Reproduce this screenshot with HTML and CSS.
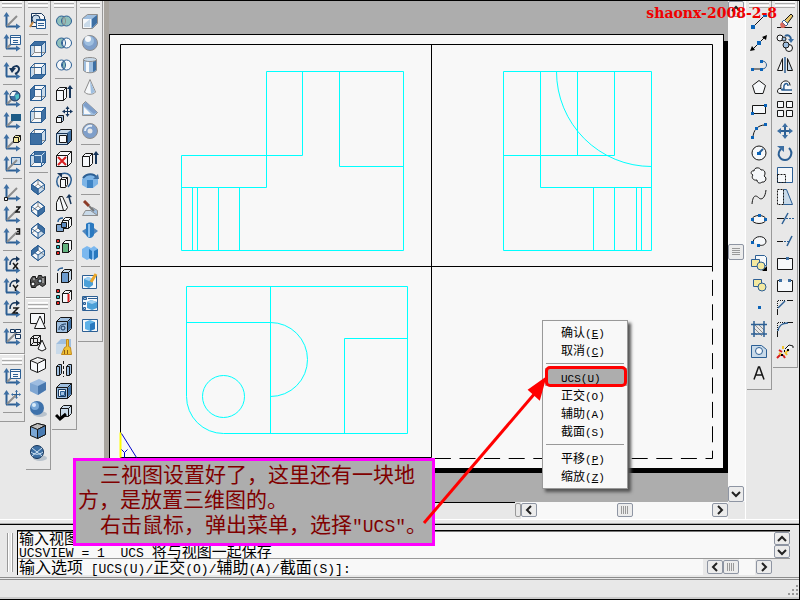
FILE: index.html
```html
<!DOCTYPE html>
<html lang="zh-CN">
<head>
<meta charset="utf-8">
<title>CAD 三视图</title>
<link rel="stylesheet" href="styles.css">
</head>
<body>
<svg class="defs" aria-hidden="true">
  <symbol id="axes" viewBox="0 0 18 18"><path class="t" d="M3.500 3v11.500M3 14.500h11"/><path class="n f1" d="M.5 4.500 3.500 0l3 4.500zM13 11.500l4.500 3-4.500 3z"/></symbol>
  <symbol id="diag" viewBox="0 0 18 18"><path class="g t" d="M4 14 14 4"/></symbol>
  <symbol id="box" viewBox="0 0 18 18"><path class="f3" d="M1.500 5.500l4-4h11v11l-4 4h-11z"/><path class="n f5" d="M6 2v10l-4 4V6zM12 16l4-4V2l-4 4z"/><path class="g" d="M5.500 2v10.500h11M5.500 12.500l-4 4"/><path d="M1.500 5.500h11v11h-11zM12.500 5.500l4-4h-11l-4 4M16.500 1.500v11l-4 4"/></symbol>
  <symbol id="iso" viewBox="0 0 18 18"><path class="f3" d="M9 1.500l6.500 5v5L9 16.500l-6.500-5v-5z"/><path class="n f5" d="M9 11l6-4v4l-6 5z"/><path class="g" d="M9 2v4l-6 5M9 6l6 5"/><path d="M9 1.500l6.500 5v5L9 16.500l-6.500-5v-5zM2.500 6.500L9 11l6.500-4.500M9 11v5.500"/></symbol>
  <symbol id="solid" viewBox="0 0 18 18"><path class="k f2" d="M1.500 5.500l4-4h11v11l-4 4h-11z"/><path class="n f1" d="M13 6l3-3v9l-3 3z"/><path class="k" d="M1.500 5.500h11v11M12.500 5.500l4-4"/></symbol>
  <symbol id="rot" viewBox="0 0 18 18"><path class="d" stroke-width="1.500" d="M7 9c0-5 3-7 7-6"/><path class="n f4" d="M13 0l4 3-4 3z"/></symbol>
  <symbol id="list" viewBox="0 0 18 18"><path class="k" fill="#e22" d="M1.500 1.500h3v3h-3z"/><path class="k" fill="#2bb" d="M1.500 7.500h3v3h-3z"/><path class="k" fill="#e22" d="M1.500 13.500h3v3h-3z"/></symbol>
  <symbol id="up" viewBox="0 0 10 8"><path d="M1 6l4-4 4 4"/></symbol>
  <symbol id="down" viewBox="0 0 10 8"><path d="M1 2l4 4 4-4"/></symbol>
  <symbol id="left" viewBox="0 0 8 10"><path d="M6 1L2 5l4 4"/></symbol>
  <symbol id="right" viewBox="0 0 8 10"><path d="M2 1l4 4-4 4"/></symbol>
</svg>

<div class="app">
  <main class="workspace">
    <div class="dock">
      <div class="column">
        <div class="toolbar" role="toolbar" aria-label="UCS">
          <i class="grip"></i>
          <button class="tool" aria-label="UCS"><svg viewBox="0 0 18 18"><use href="#axes"/><use href="#diag"/></svg></button>
          <button class="tool" aria-label="命名 UCS"><svg viewBox="0 0 18 18"><use href="#axes"/><use href="#diag"/><path class="f3" d="M7.500 1.500h10v9h-10z"/><path d="M8 3.500h9M10 6.500h5M10 8.500h5"/></svg></button>
          <hr>
          <button class="tool" aria-label="上一个 UCS"><svg viewBox="0 0 18 18"><use href="#axes"/><path class="d t" d="M9 8c1-5 7-5 7-1 0 3-2 4-4 5"/><path class="n f4" d="M6 6h7l-4 5z"/></svg></button>
          <hr>
          <button class="tool" aria-label="世界 UCS"><svg viewBox="0 0 18 18"><use href="#axes"/><use href="#diag"/><circle class="d f1" cx="12" cy="6" r="5"/><path class="n f3" d="M9 2l4 0-2 4-4 0z"/><path class="n" fill="#4fc3c8" d="M12 5l4-1v4l-3 2z"/></svg></button>
          <button class="tool" aria-label="对象 UCS"><svg viewBox="0 0 18 18"><use href="#axes"/><use href="#diag"/><path class="n" fill="#1d5b86" d="M8 2h10v7H8z"/></svg></button>
          <button class="tool" aria-label="面 UCS"><svg viewBox="0 0 18 18"><use href="#axes"/><use href="#diag"/><path class="k y" d="M10.500 3.500l2-2h5v5l-2 2h-5z"/><path class="k" d="M10.500 3.500h5v5M15.500 3.500l2-2"/></svg></button>
          <button class="tool" aria-label="视图 UCS"><svg viewBox="0 0 18 18"><use href="#axes"/><path class="f5" d="M8.500 1.500h9v7h-9z"/><use href="#diag"/></svg></button>
          <hr>
          <button class="tool" aria-label="原点 UCS"><svg viewBox="0 0 18 18"><use href="#axes"/><use href="#diag"/><path class="k f3" d="M1.500 13.500h3v3h-3z"/></svg></button>
          <button class="tool" aria-label="Z 轴矢量 UCS"><svg viewBox="0 0 18 18"><use href="#axes"/><use href="#diag"/><path class="k" stroke-width="1.500" d="M13 1h4l-4 5h4"/></svg></button>
          <button class="tool" aria-label="三点 UCS"><svg viewBox="0 0 18 18"><use href="#axes"/><use href="#diag"/><path class="k" stroke-width="1.500" d="M13 1h3.500v2.500H14M16.500 3.500V6H13"/></svg></button>
          <hr>
          <button class="tool" aria-label="绕 X 轴旋转"><svg viewBox="0 0 18 18"><use href="#axes"/><use href="#rot"/><path class="k" stroke-width="1.500" d="M10 7l5 6M15 7l-5 6"/></svg></button>
          <button class="tool" aria-label="绕 Y 轴旋转"><svg viewBox="0 0 18 18"><use href="#axes"/><use href="#rot"/><path class="k" stroke-width="1.500" d="M10 7l2.500 3L15 7M12.500 10v3"/></svg></button>
          <button class="tool" aria-label="绕 Z 轴旋转"><svg viewBox="0 0 18 18"><use href="#axes"/><use href="#rot"/><path class="k" stroke-width="1.500" d="M10 8h5l-5 5h5"/></svg></button>
          <hr>
          <button class="tool" aria-label="应用 UCS"><svg viewBox="0 0 18 18"><use href="#axes"/><use href="#diag"/><path class="d f3" d="M7.500 1.500h4v3h-4zM12.500 1.500h5v3h-5zM12.500 6.500h5v4h-5z"/></svg></button>
        </div>
        <div class="toolbar" role="toolbar" aria-label="UCS II">
          <i class="grip"></i>
          <button class="tool" aria-label="显示 UCS 对话框"><svg viewBox="0 0 18 18"><use href="#axes"/><use href="#diag"/><path class="f3" d="M7.500 1.500h10v9h-10z"/><path d="M8 3.500h9M10 6.500h5M10 8.500h5"/></svg></button>
          <button class="tool" aria-label="移动 UCS 原点"><svg viewBox="0 0 18 18"><use href="#axes"/><use href="#diag"/><path d="M13.500 0v8M9.500 4.500h8"/><path class="n f1" d="M12 2l1.500-2L15 2zM12 7l1.500 2L15 7zM10 3L8 4.500 10 6zM16 3l2 1.500L16 6z"/></svg></button>
          <hr>
        </div>
      </div>

      <div class="column">
        <div class="toolbar" role="toolbar" aria-label="视图">
          <i class="grip"></i>
          <button class="tool" aria-label="命名视图"><svg viewBox="0 0 18 18"><path class="d f3" d="M2.500 1.500h10l3 3v10h-13z"/><circle class="d f5" cx="7" cy="7" r="4"/><path stroke="#c58a45" class="t" d="M4 10l-3 5"/><path class="f3" d="M7.500 7.500h9v9h-9z"/><path class="t" d="M7 8h10"/><path d="M9 11.500h6M9 13.500h6"/></svg></button>
          <hr>
          <button class="tool" aria-label="俯视"><svg viewBox="0 0 18 18"><use href="#box"/><path class="f1" d="M1.500 5.500l4-4h11l-4 4z"/></svg></button>
          <button class="tool" aria-label="仰视"><svg viewBox="0 0 18 18"><use href="#box"/><path class="f1" d="M1.500 16.500l4-4h11l-4 4z"/></svg></button>
          <button class="tool" aria-label="左视"><svg viewBox="0 0 18 18"><use href="#box"/><path class="f1" d="M1.500 5.500l4-4v11l-4 4z"/></svg></button>
          <button class="tool" aria-label="右视"><svg viewBox="0 0 18 18"><use href="#box"/><path class="f1" d="M12.500 5.500l4-4v11l-4 4z"/></svg></button>
          <button class="tool" aria-label="主视"><svg viewBox="0 0 18 18"><use href="#box"/><path class="f1" d="M1.500 5.500h11v11h-11z"/></svg></button>
          <button class="tool" aria-label="后视"><svg viewBox="0 0 18 18"><use href="#box"/><path class="f1" d="M5.500 1.500h11v11h-11z"/><path class="w" d="M5.500 5.500h7v7M12.500 5.500l3-3"/></svg></button>
          <hr>
          <button class="tool" aria-label="西南等轴测"><svg viewBox="0 0 18 18"><use href="#iso"/><path class="f1" d="M2.500 6.500L9 11v5.500l-6.500-5z"/></svg></button>
          <button class="tool" aria-label="东南等轴测"><svg viewBox="0 0 18 18"><use href="#iso"/><path class="f1" d="M15.500 6.500L9 11v5.500l6.500-5z"/></svg></button>
          <button class="tool" aria-label="东北等轴测"><svg viewBox="0 0 18 18"><use href="#iso"/><path class="f1" d="M9 1.500l6.500 5v5L9 6z"/></svg></button>
          <button class="tool" aria-label="西北等轴测"><svg viewBox="0 0 18 18"><use href="#iso"/><path class="f1" d="M9 1.500l-6.500 5v5L9 6z"/></svg></button>
          <hr>
          <button class="tool" aria-label="相机"><svg viewBox="0 0 18 18"><path class="k" fill="#555" d="M1.500 7.500l2-3h3v2h2l1-3h3l1 2 3-1v8l-3 2-3-2-3 1-1 2h-4l-1-4z"/><circle class="k f5" cx="11" cy="9" r="2"/><circle class="k f3" cx="4" cy="12" r="2"/><path stroke="#ddd" d="M4 7h2M14 6v5"/></svg></button>
        </div>
        <div class="toolbar" role="toolbar" aria-label="着色">
          <i class="grip"></i>
          <button class="tool" aria-label="二维线框"><svg viewBox="0 0 18 18"><path class="k f3" d="M1.500 1.500h14v10h-14z"/><path class="k f3" d="M11 4l5.500 12.500h-11z"/></svg></button>
          <button class="tool" aria-label="三维线框"><svg viewBox="0 0 18 18"><path class="k" d="M1.500 4.500l3-3h7v7l-3 3h-7zM1.500 4.500h7v7M8.500 4.500l3-3M4.500 2v6.500h7M4.500 8.500l-3 3"/><path class="k f3" d="M13 6l4 9-4 2-4-2z"/></svg></button>
          <button class="tool" aria-label="消隐"><svg viewBox="0 0 18 18"><path class="k f3" d="M1.500 4.500l7-3 8 2v9l-8 4-7-3zM1.500 4.500l7 3 8-4M8.500 7.500v9"/></svg></button>
          <button class="tool" aria-label="平面着色"><svg viewBox="0 0 18 18"><path class="n" fill="#9dbce0" d="M1 5l9-4 7 3v8l-8 5-8-4z"/><path class="n" fill="#7fa6d2" d="M1 5l8 3v9l-8-4z"/><path class="n" fill="#4877ad" d="M17 4v8l-8 5V8z"/></svg></button>
          <button class="tool" aria-label="体着色"><svg viewBox="0 0 18 18"><ellipse class="n" fill="#b9c3cd" cx="11" cy="14" rx="7" ry="3"/><circle class="n" fill="#3e72ab" cx="8" cy="8" r="7"/><circle class="n" fill="#78a7d8" cx="6" cy="6" r="4"/><circle class="n" fill="#d9ebfa" cx="5" cy="5" r="2"/></svg></button>
          <button class="tool" aria-label="带边框平面着色"><svg viewBox="0 0 18 18"><path class="k" fill="#7aa7d6" d="M1.500 4.500l7-3 8 2v9l-8 4-7-3z"/><path class="k" fill="#bdbdbd" d="M1.500 4.500l7-3 8 2-8 4z"/><path class="k" fill="#4a7cb3" d="M8.500 7.500l8-4v9l-8 4z"/></svg></button>
          <button class="tool" aria-label="带边框体着色"><svg viewBox="0 0 18 18"><ellipse class="n" fill="#b9c3cd" cx="11" cy="14" rx="7" ry="3"/><circle class="d f1" cx="8" cy="8" r="6.500"/><path class="w" d="M3 4l10 8M13 4L3 12M2 8c4 3 8 3 12 0"/></svg></button>
        </div>
      </div>

      <div class="column">
        <div class="toolbar" role="toolbar" aria-label="实体编辑">
          <i class="grip"></i>
          <button class="tool" aria-label="并集"><svg viewBox="0 0 18 18"><circle fill="#8fc0bd" cx="6.500" cy="9" r="5"/><circle fill="#8fc0bd" cx="11.500" cy="9" r="5"/><path class="g" d="M9 5c-2 2-2 6 0 8 2-2 2-6 0-8"/></svg></button>
          <button class="tool" aria-label="差集"><svg viewBox="0 0 18 18"><circle fill="#8fc0bd" cx="6.500" cy="9" r="5"/><circle class="f3" cx="11.500" cy="9" r="5"/><path d="M9 5c-2 2-2 6 0 8 2-2 2-6 0-8"/></svg></button>
          <button class="tool" aria-label="交集"><svg viewBox="0 0 18 18"><circle class="f3" cx="6.500" cy="9" r="5"/><circle class="f3" cx="11.500" cy="9" r="5"/><path fill="#8fc0bd" d="M9 5c-2 2-2 6 0 8 2-2 2-6 0-8"/></svg></button>
          <hr>
          <button class="tool" aria-label="拉伸面"><svg viewBox="0 0 18 18"><path class="k f3" d="M1.500 6.500l3-3h7v10l-3 3h-7zM1.500 6.500h7v10M8.500 6.500l3-3"/><path class="d t" d="M15 4v10"/><path class="n f4" d="M12 5l3-4 3 4z"/></svg></button>
          <button class="tool" aria-label="移动面"><svg viewBox="0 0 18 18"><path class="k f2" d="M1.500 11.500l2-2h5v5l-2 2h-5z"/><path class="k f3" d="M1.500 11.500h5v5h-5z"/><path class="d" d="M12.500 1v9M8 5.500h9"/><path class="n f4" d="M10.500 3l2-3 2 3zM10.500 8l2 3 2-3zM10 3.500L7 5.500l3 2zM15 3.500l3 2-3 2z"/></svg></button>
          <button class="tool" aria-label="偏移面"><svg viewBox="0 0 18 18"><path class="k f1" d="M1.500 5.500l4-4h11v11l-4 4h-11z"/><path class="n f5" d="M3 5l3-3h10l-4 3z"/><path class="d f5" d="M1.500 5.500h11v11h-11z"/><path class="k f3" d="M4.500 7.500h7v7h-7z"/></svg></button>
          <button class="tool" aria-label="删除面"><svg viewBox="0 0 18 18"><path class="k f3" d="M1.500 5.500l4-4h11v11l-4 4h-11zM1.500 5.500h11v11M12.500 5.500l4-4"/><path class="r t" d="M3 7l8 8M11 7l-8 8"/></svg></button>
          <button class="tool" aria-label="旋转面"><svg viewBox="0 0 18 18"><path class="k f3" d="M5.500 7.500l2-2h5v7l-2 3h-5zM5.500 7.500h5v7M10.500 7.500l2-2"/><path stroke-width="1.500" d="M4 4C1 7 1 12 4 15M6 2c5-2 9 0 10 4 1 4-1 7-3 9"/><path class="n f4" d="M2 1h5v5z"/></svg></button>
          <button class="tool" aria-label="倾斜面"><svg viewBox="0 0 18 18"><path class="k f3" d="M1.500 8.500l3-6h3l5 11-2 3h-9zM4.500 2.500l4 14"/><path class="d" stroke-width="1.500" d="M16 10l-2-7"/><path class="n f4" d="M11 4l3-4 3 3z"/></svg></button>
          <button class="tool" aria-label="复制面"><svg viewBox="0 0 18 18"><path class="k f3" d="M7.500 4.500l3-3h6v8l-3 3h-6zM7.500 4.500h6v8M13.500 4.500l3-3"/><path class="k" fill="#7fa6d2" d="M1.500 8.500h7v7h-7z"/><path class="k" fill="#5e8cc0" d="M6.500 6.500h5v5h-5z"/><path stroke-width="1.500" d="M3 6c0-3 2-4 5-4"/></svg></button>
          <button class="tool" aria-label="着色面"><svg viewBox="0 0 18 18"><use href="#list"/><path class="k f3" d="M7.500 5.500l3-3h6v9l-3 3h-6z"/><path class="k" fill="#62b27e" d="M7.500 5.500h6v9h-6z"/></svg></button>
          <hr>
          <button class="tool" aria-label="复制边"><svg viewBox="0 0 18 18"><path class="k f5" d="M6.500 6.500l3-3h7v10l-3 3h-7z"/><path class="k" fill="#6c9bcd" d="M6.500 6.500h7v10h-7z"/><path class="k" d="M13.500 6.500l3-3M2.500 7v10"/><path stroke-width="1.500" d="M3 5c0-2 3-3 5-3"/></svg></button>
          <button class="tool" aria-label="着色边"><svg viewBox="0 0 18 18"><use href="#list"/><path class="k f3" d="M7.500 5.500l3-3h6v9l-3 3h-6zM7.500 5.500h6l3-3"/><path class="r t" d="M13.500 6v8"/></svg></button>
          <hr>
          <button class="tool" aria-label="压印"><svg viewBox="0 0 18 18"><use href="#solid"/><path class="d" d="M4 14c0-4 2-6 7-6"/><circle class="d" cx="8" cy="12" r="2"/></svg></button>
          <button class="tool" aria-label="清除"><svg viewBox="0 0 18 18"><path class="n f2" d="M1 6l5-5h10v10l-5 5H1z"/><path class="n f5" d="M1 6h10v10H1z"/><path stroke="#c48a1a" fill="#efc236" d="M9.500 9.500l2-1v-7h2v7l2 1 1 7h-10z"/><path stroke="#8c5a13" d="M9.500 12v4M12.500 12v4"/></svg></button>
          <button class="tool" aria-label="分割"><svg viewBox="0 0 18 18"><path class="k f2" d="M1.500 6.500l2-2h3v9l-2 2h-3zM11.500 6.500l2-2h3v9l-2 2h-3z"/><path class="k" d="M1.500 6.500h3v9M11.500 6.500h3v9"/><path class="k" stroke-dasharray="3 2" d="M8.500 1v16"/></svg></button>
          <button class="tool" aria-label="抽壳"><svg viewBox="0 0 18 18"><use href="#solid"/><path class="d f3" d="M3.500 7.500h7v7h-7z"/><path class="f2" d="M5.500 9.500h4v4h-4z"/></svg></button>
          <button class="tool" aria-label="检查"><svg viewBox="0 0 18 18"><path class="k f5" d="M5.500 4.500l3-3h8v8l-3 3h-8zM5.500 4.500h8v8M13.500 4.500l3-3"/><path stroke="#000" stroke-width="3" d="M1 11l4 4 6-5"/></svg></button>
        </div>
      </div>

      <div class="column">
        <div class="toolbar" role="toolbar" aria-label="实体">
          <i class="grip"></i>
          <button class="tool" aria-label="长方体"><svg viewBox="0 0 18 18"><path class="g f2" d="M1.500 6.500l5-4h10v9l-5 5h-10z"/><path class="n f3" d="M2 7h8v9H2z"/><path class="n f1" d="M11 7l5-4v8l-5 5z"/><path class="n f5" d="M3 12l6-5v8H3z"/></svg></button>
          <button class="tool" aria-label="球体"><svg viewBox="0 0 18 18"><circle class="g" fill="#7f9fca" cx="9" cy="9" r="7.500"/><circle class="n f2" cx="8" cy="7" r="5"/><circle class="n f3" cx="7" cy="5" r="3"/></svg></button>
          <button class="tool" aria-label="圆柱体"><svg viewBox="0 0 18 18"><path class="g f2" d="M2.500 3.500v11c3 3 10 3 13 0v-11z"/><path class="n f1" d="M12 5h3v9l-3 2z"/><path class="n f3" d="M5 6h3v10H5z"/><ellipse class="g f5" cx="9" cy="3.500" rx="6.500" ry="2"/></svg></button>
          <button class="tool" aria-label="圆锥体"><svg viewBox="0 0 18 18"><path class="g f3" d="M9 1.500L3.500 14c2 3 9 3 11 0z"/><path class="n f2" d="M9 3l5 11-4 2z"/></svg></button>
          <button class="tool" aria-label="楔体"><svg viewBox="0 0 18 18"><path class="g f2" d="M1.500 13.500v-9l3-3 12 11-3 3h-12z"/><path class="n" fill="#7f9fca" d="M5 2l11 10-3 2L2 5z"/><path class="n f3" d="M3 7l7 7H3z"/></svg></button>
          <button class="tool" aria-label="圆环体"><svg viewBox="0 0 18 18"><circle cx="9" cy="9" r="5" stroke="#7f9fca" stroke-width="5"/><circle class="g" cx="9" cy="9" r="7.500"/><path stroke="#e6eff8" class="t" d="M4 9c0-4 4-6 7-5"/></svg></button>
          <hr>
          <button class="tool" aria-label="拉伸"><svg viewBox="0 0 18 18"><path class="k f3" d="M1.500 6.500l3-3h7v10l-3 3h-7zM1.500 6.500h7v10M8.500 6.500l3-3"/><path class="d t" d="M15 4v10"/><path class="n f4" d="M12 5l3-4 3 4z"/></svg></button>
          <button class="tool" aria-label="旋转"><svg viewBox="0 0 18 18"><path class="n" fill="#7db4e6" d="M1 7l4-4h8l4 4v5l-5 4H6l-5-3z"/><path class="t" d="M2 6c4-5 11-5 14 0"/><path class="n f1" d="M12 7h6l-1-5z"/><path class="n" fill="#3f85c6" d="M6 8h6v8H6z"/></svg></button>
          <hr>
          <button class="tool" aria-label="剖切"><svg viewBox="0 0 18 18"><path class="g f5" d="M4.500 10.500h8l4 5h-15z"/><path class="g f2" d="M9.500 10.500l2-3 5 3v5z"/><path stroke="#8c3b28" stroke-width="3" d="M3 1l5 5"/><path stroke="#777" class="t" d="M8 6l5 5"/></svg></button>
          <button class="tool" aria-label="切割"><svg viewBox="0 0 18 18"><path class="n" fill="#4f86bd" d="M1 9l5-3h7l4 3-5 4H5z"/><path class="n" fill="#2a79c0" d="M5 2c2-2 6-2 8 0v11c-2 4-6 4-8 0z"/><path class="n" fill="#8cc1ee" d="M7 2h2v13H7z"/></svg></button>
          <button class="tool" aria-label="干涉"><svg viewBox="0 0 18 18"><path class="n" fill="#7bb8ef" d="M1 5l5-3 4 2 3-2 4 3v8l-4 3-3-2-4 2-5-3z"/><path class="n" fill="#2878be" d="M8 5l3 2v9l-3-2zM13 7l4-2v8l-4 3z"/></svg></button>
          <hr>
          <button class="tool" aria-label="设置图形"><svg viewBox="0 0 18 18"><path class="f3" d="M1.500 3.500h14v13h-14z"/><path class="n" fill="#4ba0d8" d="M3 7l4-2 5 2v6l-4 3-5-2z"/><path class="n" fill="#9fd0f2" d="M3 7l4-2 5 2-4 2z"/><path stroke="#e9a62b" stroke-width="3" d="M15 2l-5 8"/></svg></button>
          <button class="tool" aria-label="设置视图"><svg viewBox="0 0 18 18"><path class="f3" d="M1.500 2.500h15v14h-15z"/><path class="f2" d="M2.500 3.500h3v2h-3zM2.500 8.500h2v2h-2zM2.500 13.500h2v2h-2z"/><path d="M7 4.500h9"/><path class="n" fill="#4ba0d8" d="M6 8l4-2 6 2v6l-5 2-5-2z"/><path class="n" fill="#9fd0f2" d="M6 8l4-2 6 2-5 2z"/></svg></button>
          <button class="tool" aria-label="设置轮廓"><svg viewBox="0 0 18 18"><path class="f3" d="M1.500 3.500h15v12h-15z"/><path class="n" fill="#5eb2e8" d="M4 6l5-2 5 2v7l-5 2-5-2z"/><path class="n" fill="#2878be" d="M9 8l5-2v7l-5 2z"/></svg></button>
        </div>
      </div>
    </div>

    <section class="drawing" aria-label="图形窗口">
      <svg class="paper" viewBox="109 1 619 501" preserveAspectRatio="xMinYMin meet" role="img" aria-label="三视图">
        <path class="shade" d="M117 41h611v432H117z"/>
        <path class="black" d="M109 34h615v434H109z"/>
        <path class="sheet" d="M110 35h613v433H110z"/>
        <path class="black" d="M109 34h1v468h-1z"/>
        <g transform="translate(.5 .5)">
          <path class="frame" d="M120 44H712V266H120zM431 44V457H120V266"/>
          <path class="frame" stroke-dasharray="16 8.400" stroke-dashoffset="11" d="M712 266V458"/>
          <path class="frame" stroke-dasharray="16 8.600" stroke-dashoffset="9" d="M712 458H431"/>
          <path class="part" d="M266 71H403V250H181V155H302V71M266 71V187H181M339 71V166H403M192 187V250M197 187V250M218 187V250M239 187V250"/>
          <path class="part" d="M503 71H651V250H503zM503 155H614V71M540 71V187H651M577 71V155M593 187V250M614 187V250M636 187V250M641 187V250M556 71A95 95 0 0 0 651 166"/>
          <path class="part" d="M186 286H407V433H223A37 37 0 0 1 186 396zM186 322H270M270 286V433M270 322A37 37 0 0 1 270 396M407 338H344V433"/>
          <circle class="part" cx="223" cy="396" r="21"/>
          <path class="ucs-x" d="M120 432V457"/>
          <path class="ucs-y" d="M121 433L136 457M121 449l3 3 3-3M124 452v5"/>
        </g>
      </svg>
      <div class="vscroll">
        <button class="sb" aria-label="向上滚动"><svg class="h"><use href="#up"/></svg></button>
        <button class="sb thumb-v" aria-label="垂直滑块"></button>
        <button class="sb" aria-label="向下滚动"><svg class="h"><use href="#down"/></svg></button>
      </div>
      <div class="hscroll">
        <i class="split"></i>
        <div class="track">
          <button class="sb" aria-label="向左滚动"><svg class="v"><use href="#left"/></svg></button>
          <button class="sb thumb-h" aria-label="水平滑块"></button>
          <button class="sb" aria-label="向右滚动"><svg class="v"><use href="#right"/></svg></button>
        </div>
      </div>
    </section>

    <div class="dock dock-right">
      <div class="column">
        <div class="toolbar" role="toolbar" aria-label="绘图">
          <i class="grip"></i>
          <button class="tool" aria-label="直线"><svg viewBox="0 0 18 18"><path class="k" d="M3 15L15 3"/><path class="n p" d="M1 13h4v4H1zM13 1h4v4h-4z"/></svg></button>
          <button class="tool" aria-label="构造线"><svg viewBox="0 0 18 18"><path class="k" d="M2 16L16 2"/><path class="n bk" d="M0 17l2-5 3 4zM17 1l-5 2 4 3z"/><path class="n p" d="M7 7h4v4H7z"/></svg></button>
          <button class="tool" aria-label="多段线"><svg viewBox="0 0 18 18"><path class="k" d="M3 13h8"/><path d="M12 13c6 0 6-8 0-8"/><path class="n p" d="M1 12h3v3H1zM10 12h3v3h-3zM10 4h3v3h-3z"/></svg></button>
          <button class="tool" aria-label="正多边形"><svg viewBox="0 0 18 18"><path class="k f3" d="M9 2.500l6.500 5-2.500 8H5l-2.500-8z"/></svg></button>
          <button class="tool" aria-label="矩形"><svg viewBox="0 0 18 18"><path class="k f3" d="M2.500 5.500h13v8h-13z"/><path class="n p" d="M1 12h3v3H1zM14 4h3v3h-3z"/></svg></button>
          <button class="tool" aria-label="圆弧"><svg viewBox="0 0 18 18"><path class="k" d="M3 16C3 8 8 3 15 3"/><path class="n p" d="M1 14h3v3H1zM5 5h3v3H5zM14 1h3v3h-3z"/></svg></button>
          <button class="tool" aria-label="圆"><svg viewBox="0 0 18 18"><circle class="k f3" cx="9" cy="9" r="7"/><path class="t" d="M9 9l4-4"/><path class="n p" d="M7 8h4v3H7z"/></svg></button>
          <button class="tool" aria-label="修订云线"><svg viewBox="0 0 18 18"><path class="k f3" d="M4 5c0-4 6-4 7-1 4-1 5 4 3 6 4 2 1 7-2 6-2 2-5 1-5-2-4 1-6-3-4-5-3-1-2-5 1-4z"/></svg></button>
          <button class="tool" aria-label="样条曲线"><svg viewBox="0 0 18 18"><path class="k" d="M2 16C3 5 7 8 9 10s6 1 7-8"/></svg></button>
          <button class="tool" aria-label="椭圆"><svg viewBox="0 0 18 18"><ellipse class="k f3" cx="9" cy="9.500" rx="7" ry="4"/><path class="n p" d="M1 8h3v3H1zM14 8h3v3h-3zM8 4h3v3H8z"/></svg></button>
          <button class="tool" aria-label="椭圆弧"><svg viewBox="0 0 18 18"><path class="k f3" d="M3 10C4 3 15 3 16 9c0 4-4 5-7 4"/><path class="n p" d="M1 9h3v3H1zM7 12h3v3H7z"/></svg></button>
          <button class="tool" aria-label="插入块"><svg viewBox="0 0 18 18"><path class="f3" d="M5.500 1.500h9l2 2v8h-11z"/><path class="y" d="M1.500 5.500h8v7h-8z"/><circle class="y" cx="11" cy="12" r="4"/><path class="n bk" d="M17 12v5h-5z"/></svg></button>
          <button class="tool" aria-label="创建块"><svg viewBox="0 0 18 18"><path class="y" d="M3.500 3.500h8v7h-8z"/><circle class="y" cx="12" cy="11" r="4"/></svg></button>
          <button class="tool" aria-label="点"><svg viewBox="0 0 18 18"><path class="n p" d="M8 8h3v3H8z"/></svg></button>
          <button class="tool" aria-label="图案填充"><svg viewBox="0 0 18 18"><path class="g" d="M4 8l8 8M4 4l10 10M8 4l6 6M4 12l3 3M12 4l2 2"/><path stroke-width="1.500" d="M4 1v16M14 1v16M1 4.500h16M1 14h16"/></svg></button>
          <button class="tool" aria-label="面域"><svg viewBox="0 0 18 18"><path class="f5" d="M1.500 3.500h10l5 4v8h-15z"/><circle class="f3" cx="9" cy="9" r="3.500"/></svg></button>
          <button class="tool" aria-label="多行文字"><svg viewBox="0 0 18 18"><path class="k" stroke-width="1.500" d="M4 15.500L8.500 3h1L14 15.500M6 11h6"/></svg></button>
        </div>
      </div>
      <div class="column">
        <div class="toolbar" role="toolbar" aria-label="修改">
          <i class="grip"></i>
          <button class="tool" aria-label="删除"><svg viewBox="0 0 18 18"><path class="k" d="M1 15.500h15"/><path class="k" fill="#e8c66c" d="M8 9l7-7 2 2-6 8z"/><path fill="#fff" d="M6 10l2-2 4 4-2 2z"/><path class="n" fill="#d7695d" d="M4 12l2-2 4 4-2 2H5z"/></svg></button>
          <button class="tool" aria-label="复制"><svg viewBox="0 0 18 18"><circle class="k f3" cx="4" cy="4" r="3"/><circle class="k f2" cx="8" cy="5" r="2"/><circle class="k f3" cx="13" cy="14" r="3.500"/><circle class="k f2" cx="10" cy="11" r="3"/><path class="t" d="M9 2c3-2 6 0 6 4"/><path class="n f1" d="M12 5h6l-3 4z"/></svg></button>
          <button class="tool" aria-label="镜像"><svg viewBox="0 0 18 18"><path class="k f3" d="M6.500 2.500v12h-5z"/><path class="k f5" d="M11.500 2.500v12h5z"/><path stroke-width="1.500" d="M9 1v16"/></svg></button>
          <button class="tool" aria-label="偏移"><svg viewBox="0 0 18 18"><path class="k f3" d="M16 15.500H4c-4 0-3-6 1-5-2-9 9-10 9-3"/><path stroke-width="1.500" d="M16 12H6c-1-1 0-1 2-1-1-6 4-7 4-3"/></svg></button>
          <button class="tool" aria-label="阵列"><svg viewBox="0 0 18 18"><path class="k f3" d="M1.500 1.500h6v6h-6zM10.500 1.500h6v6h-6zM1.500 10.500h6v6h-6zM10.500 10.500h6v6h-6z"/></svg></button>
          <button class="tool" aria-label="移动"><svg viewBox="0 0 18 18"><path class="t" d="M9 3v12M3 9h12"/><path class="n f1" d="M6 5l3-4 3 4zM6 13l3 4 3-4zM5 6L1 9l4 3zM13 6l4 3-4 3z"/></svg></button>
          <button class="tool" aria-label="旋转"><svg viewBox="0 0 18 18"><path class="t" d="M5 5c-5 5-1 11 4 11s9-7 4-12"/><path class="n f1" d="M1 2h7v6z"/></svg></button>
          <button class="tool" aria-label="缩放"><svg viewBox="0 0 18 18"><path class="f3" d="M1.500 1.500h15v15h-15z"/><path class="k" stroke-dasharray="2 1" d="M1.500 8.500h8v8h-8z"/></svg></button>
          <button class="tool" aria-label="拉伸"><svg viewBox="0 0 18 18"><path class="f5" d="M7.500 1.500h3l6 15h-9z"/><path class="k f3" stroke-dasharray="2 1" d="M1.500 1.500h6v15h-6z"/></svg></button>
          <button class="tool" aria-label="修剪"><svg viewBox="0 0 18 18"><path class="k" d="M1 8.500h7"/><path stroke-dasharray="2 1" d="M10 8.500h8"/><path stroke-width="1.500" d="M6 14l6-11"/></svg></button>
          <button class="tool" aria-label="延伸"><svg viewBox="0 0 18 18"><path class="k" d="M1 9.500h6"/><path stroke-dasharray="2 1" d="M8 9.500h5"/><path stroke-width="1.500" d="M11 14l5-10"/></svg></button>
          <button class="tool" aria-label="打断于点"><svg viewBox="0 0 18 18"><path class="k f3" d="M1.500 4.500h15v11h-15z"/><path class="n f1" d="M10 3h3v3h-3z"/></svg></button>
          <button class="tool" aria-label="打断"><svg viewBox="0 0 18 18"><path class="k f3" d="M4 4.500H1.500v11h15v-11H14"/><path class="n f1" d="M3 3h3v3H3zM12 3h3v3h-3z"/></svg></button>
          <button class="tool" aria-label="倒角"><svg viewBox="0 0 18 18"><path class="k" d="M1.500 17v-6M11 2.500h6"/><path class="k" stroke-dasharray="1 1" d="M1.500 10V2.500H10"/><path stroke-width="1.500" d="M2 10l7-7"/></svg></button>
          <button class="tool" aria-label="圆角"><svg viewBox="0 0 18 18"><path class="k" d="M1.500 17v-6M11 2.500h6"/><path class="k" stroke-dasharray="1 1" d="M1.500 10V2.500H10"/><path stroke-width="1.500" d="M2 11c1-6 4-8 10-8"/></svg></button>
          <button class="tool" aria-label="分解"><svg viewBox="0 0 18 18"><path class="k f3" d="M9 7l4-4 4 1v2"/><path class="r t" d="M1 16l4-4M3 8l3 2M9 16l-2-3"/><path stroke="#f2c22b" class="t" d="M3 11l3 2M9 10l2 3M7 4v3M13 8l-3 2"/><path class="n bk" d="M5 12h2v2H5zM11 7h2v2h-2zM8 8h1v2H8z"/></svg></button>
        </div>
      </div>
    </div>
  </main>

  <div class="edge"></div>

  <section class="command" aria-label="命令行">
    <i class="handle"></i>
    <div class="console">
      <div class="history">
        <div class="lines">
          <p>输入视图</p>
          <p><span>UCSVIEW = 1&nbsp; UCS </span>将与视图一起保存</p>
        </div>
        <div class="steps">
          <button class="sb" aria-label="上一行"><svg class="h"><use href="#up"/></svg></button>
          <button class="sb" aria-label="下一行"><svg class="h"><use href="#down"/></svg></button>
        </div>
      </div>
      <div class="prompt">
        <label for="cmd">输入选项<span> [UCS(U)/</span>正交<span>(O)/</span>辅助<span>(A)/</span>截面<span>(S)]:</span></label>
        <input id="cmd" type="text" autocomplete="off">
        <div class="pan">
          <button class="sb" aria-label="向左"><svg class="v"><use href="#left"/></svg></button>
          <button class="sb thumb-h" aria-label="滑块"></button>
          <button class="sb last" aria-label="向右"><svg class="v"><use href="#right"/></svg></button>
        </div>
      </div>
    </div>
  </section>

  <footer class="status"><svg viewBox="0 0 12 12" aria-hidden="true"><path d="M9 0h2v2H9zM5 4h2v2H5zM9 4h2v2H9zM1 8h2v2H1zM5 8h2v2H5zM9 8h2v2H9z"/></svg></footer>

  <div class="menu" role="menu">
    <button role="menuitem">确认<span>(<u>E</u>)</span></button>
    <button role="menuitem">取消<span>(<u>C</u>)</span></button>
    <hr>
    <button role="menuitem" class="picked"><span>UCS(U)</span></button>
    <button role="menuitem">正交<span>(O)</span></button>
    <button role="menuitem">辅助<span>(A)</span></button>
    <button role="menuitem">截面<span>(S)</span></button>
    <hr>
    <button role="menuitem">平移<span>(<u>P</u>)</span></button>
    <button role="menuitem">缩放<span>(<u>Z</u>)</span></button>
  </div>

  <div class="note">
    <p class="indent">三视图设置好了，这里还有一块地</p>
    <p>方，是放置三维图的。</p>
    <p class="indent">右击鼠标，弹出菜单，选择<span>"UCS"</span>。</p>
  </div>
  <svg class="arrow" viewBox="0 0 130 150" aria-hidden="true"><path d="M5 147L117 16"/><path class="head" d="M125 4l-14 10 9 8z"/></svg>
  <div class="stamp">shaonx-2008-2-8</div>
</div>
</body>
</html>
```
FILE: styles.css
```css
* { box-sizing: border-box; }

body {
  margin: 0;
  font-family: "Noto Sans CJK SC", sans-serif;
  font-size: 12px;
  color: #000;
}

p { margin: 0; }

button {
  padding: 0;
  margin: 0;
  border: 0;
  background: none;
  font: inherit;
  color: inherit;
}

.defs { position: absolute; width: 0; height: 0; }

.app {
  position: relative;
  display: flex;
  flex-direction: column;
  height: 100vh;
  overflow: hidden;
  background: #e8e8e8;
  border: solid #000;
  border-width: 1px 1px 1px 0;
}

.workspace { flex: 1; min-height: 0; display: flex; }

/* Toolbars */
.dock { display: flex; gap: 1px; padding-right: 1px; }
.dock-right { padding-left: 1px; border-left: 1px solid #fff; }

.toolbar {
  width: 25px;
  padding-bottom: 5px;
  border: solid #999;
  border-width: 0 1px 1px 0;
}
.toolbar + .toolbar { border-top: 1px solid #fff; }

.grip {
  display: block;
  height: 9px;
  margin: 0 2px;
  background: linear-gradient(#fff 1px, #f4f4f4 1px 2px, #aaa 2px 3px, #e8e8e8 3px 4px, #fff 4px 5px, #f4f4f4 5px 6px, #aaa 6px 7px, #e8e8e8 7px);
}
.toolbar + .toolbar .grip { height: 11px; border-top: 3px solid #e8e8e8; }

.tool {
  display: flex;
  align-items: center;
  justify-content: center;
  width: 24px;
  height: 22px;
}

.toolbar hr {
  height: 1px;
  margin: 2px 2px 3px 3px;
  border: 0;
  background: #999;
}

.tool svg, symbol { fill: none; stroke: #2c5f94; stroke-width: 1; }
.tool svg { width: 18px; height: 18px; }

.k { stroke: #161616; }
.g { stroke: #8d8d8d; }
.d { stroke: #16355a; }
.r { stroke: #d81f1f; }
.w { stroke: #cfe2f2; }
.n { stroke: none; }
.t { stroke-width: 2; }
.f1 { fill: #3d6fa3; }
.f2 { fill: #9fbfe0; }
.f3 { fill: #f6f8fa; }
.f4 { fill: #16355a; }
.f5 { fill: #c9dae9; }
.y { fill: #f3e9a0; }
.p { fill: #0b63b8; }
.bk { fill: #000; }

/* Drawing window */
.drawing {
  flex: 1;
  min-width: 0;
  display: grid;
  grid-template-columns: minmax(0, 1fr) 17px;
  grid-template-rows: minmax(0, 1fr) 17px;
  border-left: 5px solid #a8a49e;
}

.paper { display: block; width: 100%; height: 100%; background: #adadad; }
.sheet { fill: #f8f8f8; }
.black, .shade { fill: #000; }
.frame, .part, .ucs-x, .ucs-y { fill: none; stroke: #000; }
.part { stroke: #0ff; }
.ucs-x { stroke: #ff0; stroke-width: 2; }
.ucs-y { stroke: #00c; }

.vscroll {
  display: flex;
  flex-direction: column;
  justify-content: space-between;
  background: #f8f8f8;
}

.hscroll { display: flex; }
.hscroll::before { content: ""; flex: 1; border-top: 1px solid #000; }

.split {
  width: 6px;
  margin: 1px 0 2px;
  border: 1px solid #999;
  border-radius: 2px;
  background: #e8e8e8;
}

.track {
  flex: 0 0 207px;
  display: flex;
  justify-content: space-between;
  background: #f8f8f8;
}

.sb {
  flex: none;
  display: flex;
  align-items: center;
  justify-content: center;
  width: 16px;
  height: 16px;
  border: 1px solid #8e95a3;
  border-radius: 2px;
  background: #ececec;
}
.sb .h { width: 10px; height: 8px; }
.sb .v { width: 8px; height: 10px; }
#up, #down, #left, #right { stroke: #222; stroke-width: 2; }

.thumb-v::before, .thumb-h::before {
  content: "";
  width: 8px;
  height: 8px;
  background: repeating-linear-gradient(#999 0 1px, transparent 1px 2px);
}
.thumb-h::before { background: repeating-linear-gradient(90deg, #999 0 1px, transparent 1px 2px); }

.track .sb, .pan .sb { height: 14px; margin-top: 1px; }

/* Command line */
.edge {
  flex: none;
  height: 6px;
  border-top: 1px solid #fff;
  border-bottom: 1px solid #000;
  box-shadow: inset 0 -1px #aaa;
}

.command {
  flex: none;
  display: flex;
  padding: 5px 9px 2px 0;
  border-bottom: 3px double #8c8c8c;
}

.handle {
  width: 6px;
  margin: 3px 4px 3px 7px;
  border: solid #999;
  border-width: 0 1px;
  background: linear-gradient(90deg, #fff 1px, #e8e8e8 1px 3px, #fff 3px);
}

.console {
  flex: 1;
  min-width: 0;
  border: solid #000;
  border-width: 1px 0 0 1px;
  font-size: 15px;
}
.console span {
  font-family: "Liberation Mono", monospace;
  font-size: 13px;
  line-height: 0;
  white-space: pre;
}

.history {
  display: flex;
  justify-content: space-between;
  border-top: 1px solid #777;
  border-bottom: 1px solid #999;
  background: #f8f8f8;
}
.lines { padding-left: 1px; }
.lines p { height: 13px; line-height: 11px; white-space: nowrap; }
.steps .sb { height: 13px; }

.prompt { display: flex; height: 16px; font-size: 16px; }
.prompt label { padding-left: 1px; background: #f8f8f8; line-height: 14px; white-space: nowrap; }
.prompt input {
  flex: 1;
  min-width: 0;
  padding: 0;
  border: 0;
  outline: 0;
  background: #f8f8f8;
}

.pan {
  display: flex;
  width: 87px;
  padding: 0 18px 0 4px;
  background: linear-gradient(#f8f8f8, #f8f8f8) no-repeat 36px 0 / 16px 100%;
}
.pan .last { margin-left: auto; }

.status {
  flex: none;
  display: flex;
  justify-content: flex-end;
  align-items: flex-end;
  height: 19px;
  border-bottom: 2px solid #ccc;
}
.status svg { width: 12px; height: 12px; fill: #999; }

/* Shortcut menu */
.menu {
  position: absolute;
  left: 542px;
  top: 319px;
  width: 86px;
  padding: 2px 0 3px 2px;
  border: 1px solid #999;
  background: #f8f8f8;
  box-shadow: 3px 3px 3px #555;
}
.menu button {
  position: relative;
  display: block;
  width: 100%;
  height: 18px;
  padding-left: 16px;
  line-height: 16px;
  text-align: left;
}
.menu span {
  font-family: "Liberation Mono", monospace;
  font-size: 11px;
  line-height: 0;
}
.menu hr { height: 1px; margin: 4px 3px 4px 1px; border: 0; background: #999; }
.menu .picked { background: #adadad; }
.menu .picked::after {
  content: "";
  position: absolute;
  inset: -2px 0 -1px;
  border: 3px solid #f00;
  border-radius: 5px;
}

/* Tutorial callout */
.note {
  position: absolute;
  left: 73px;
  top: 457px;
  width: 362px;
  padding: 0 0 7px 2px;
  border: 3px solid #f0f;
  background: #adadad;
  color: #800000;
  font-size: 21px;
  line-height: 25px;
  white-space: nowrap;
}
.note p { height: 25px; line-height: 24px; }
.note .indent { padding-left: 22px; }
.note span { font-family: "Liberation Mono", monospace; font-size: 18px; line-height: 0; }

.arrow { position: absolute; left: 419px; top: 375px; width: 130px; height: 150px; }
.arrow path { fill: none; stroke: #f00; stroke-width: 3; }
.arrow .head { fill: #f00; }

.stamp {
  position: absolute;
  right: 22px;
  top: 4px;
  color: #f00000;
  font: bold 14px/17px "DejaVu Serif", serif;
}
```
